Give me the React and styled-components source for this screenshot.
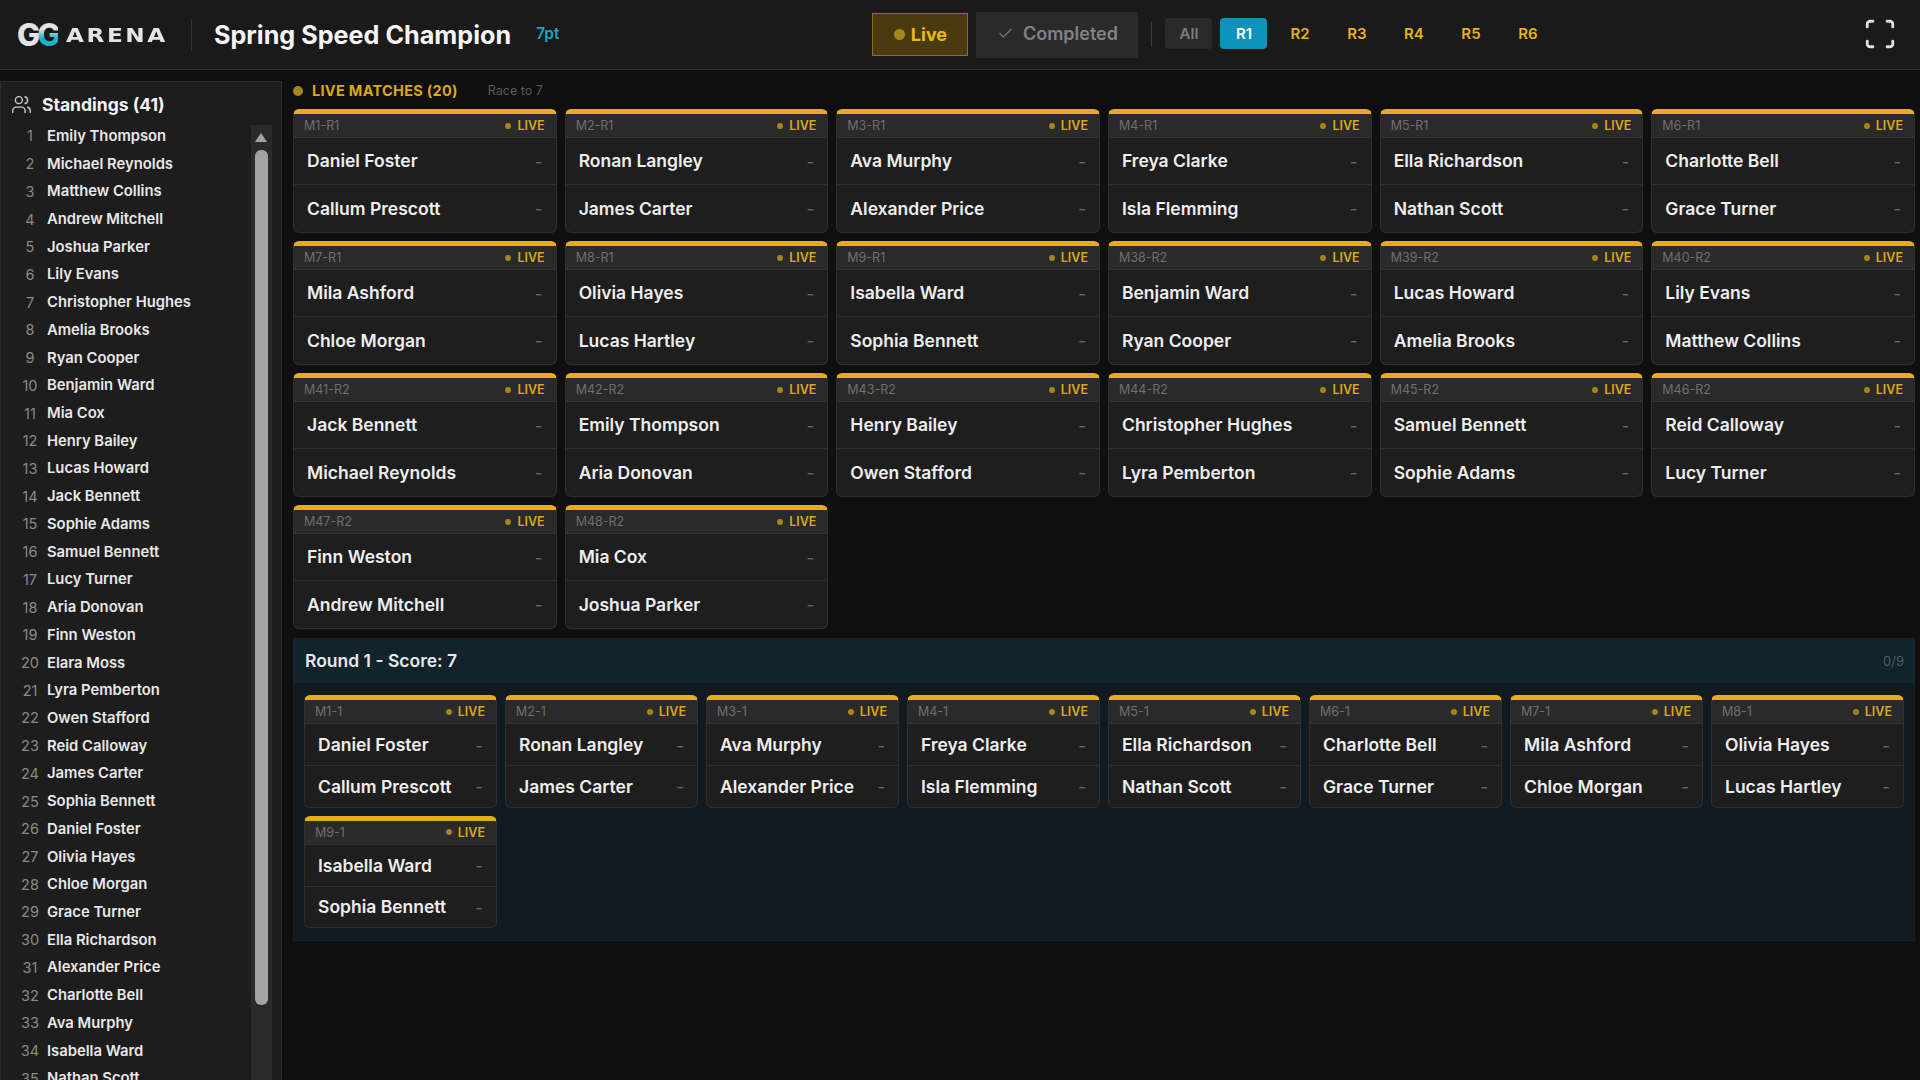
import React from "react";
import styled, { createGlobalStyle } from "styled-components";
import { Users, Check, Scan } from "lucide-react";

const GlobalStyle = createGlobalStyle`
  html, body {
    margin: 0;
    padding: 0;
    height: 100%;
    overflow: hidden;
    background: #0f0f0f;
  }
  * {
    box-sizing: border-box;
  }
  body {
    font-family: Inter, "Liberation Sans", sans-serif;
    color: #f2f2f2;
  }
`;

const standings = [
  "Emily Thompson", "Michael Reynolds", "Matthew Collins", "Andrew Mitchell", "Joshua Parker",
  "Lily Evans", "Christopher Hughes", "Amelia Brooks", "Ryan Cooper", "Benjamin Ward",
  "Mia Cox", "Henry Bailey", "Lucas Howard", "Jack Bennett", "Sophie Adams",
  "Samuel Bennett", "Lucy Turner", "Aria Donovan", "Finn Weston", "Elara Moss",
  "Lyra Pemberton", "Owen Stafford", "Reid Calloway", "James Carter", "Sophia Bennett",
  "Daniel Foster", "Olivia Hayes", "Chloe Morgan", "Grace Turner", "Ella Richardson",
  "Alexander Price", "Charlotte Bell", "Ava Murphy", "Isabella Ward", "Nathan Scott",
  "Callum Prescott", "Ronan Langley", "Freya Clarke", "Isla Flemming", "Mila Ashford", "Lucas Hartley",
];

const liveMatches = [
  ["M1-R1", "Daniel Foster", "Callum Prescott"],
  ["M2-R1", "Ronan Langley", "James Carter"],
  ["M3-R1", "Ava Murphy", "Alexander Price"],
  ["M4-R1", "Freya Clarke", "Isla Flemming"],
  ["M5-R1", "Ella Richardson", "Nathan Scott"],
  ["M6-R1", "Charlotte Bell", "Grace Turner"],
  ["M7-R1", "Mila Ashford", "Chloe Morgan"],
  ["M8-R1", "Olivia Hayes", "Lucas Hartley"],
  ["M9-R1", "Isabella Ward", "Sophia Bennett"],
  ["M38-R2", "Benjamin Ward", "Ryan Cooper"],
  ["M39-R2", "Lucas Howard", "Amelia Brooks"],
  ["M40-R2", "Lily Evans", "Matthew Collins"],
  ["M41-R2", "Jack Bennett", "Michael Reynolds"],
  ["M42-R2", "Emily Thompson", "Aria Donovan"],
  ["M43-R2", "Henry Bailey", "Owen Stafford"],
  ["M44-R2", "Christopher Hughes", "Lyra Pemberton"],
  ["M45-R2", "Samuel Bennett", "Sophie Adams"],
  ["M46-R2", "Reid Calloway", "Lucy Turner"],
  ["M47-R2", "Finn Weston", "Andrew Mitchell"],
  ["M48-R2", "Mia Cox", "Joshua Parker"],
];

const roundMatches = liveMatches.slice(0, 9).map(([id, a, b], i) => [`M${i + 1}-1`, a, b]);

const rounds = ["R1", "R2", "R3", "R4", "R5", "R6"];

const Page = styled.div`
  height: 1080px;
  overflow: hidden;
  display: flex;
  flex-direction: column;
`;

const Header = styled.header`
  height: 70px;
  flex: none;
  display: flex;
  align-items: center;
  background: #1a1a1a;
  border-bottom: 1px solid #2e2e2e;
  padding: 0 23px 0 17px;
`;

const Logo = styled.div`
  width: 150px;
  display: flex;
  align-items: center;
  white-space: nowrap;
`;

const LogoMark = styled.span`
  font-size: 31px;
  font-weight: 800;
  letter-spacing: -3px;
  line-height: 1;
  color: #e4e4e4;
`;

const LogoAccent = styled.span`
  background: linear-gradient(180deg, #e4e4e4 35%, #19b4cc 60%);
  -webkit-background-clip: text;
  background-clip: text;
  color: transparent;
`;

const LogoWord = styled.span`
  margin-left: 8px;
  font-family: "DejaVu Sans", sans-serif;
  font-size: 20px;
  font-weight: 700;
  letter-spacing: 2.2px;
  color: #e4e4e4;
  transform: scaleX(1.16);
  transform-origin: left center;
`;

const HeaderDivider = styled.div`
  width: 1px;
  height: 32px;
  background: #333;
  margin: 0 22px 0 24px;
`;

const Title = styled.h1`
  margin: 0;
  font-size: 25.2px;
  font-weight: 700;
  color: #f5f5f5;
`;

const Points = styled.span`
  margin: -3px 0 0 25px;
  font-size: 15.5px;
  font-weight: 600;
  color: #17a2c8;
`;

const StatusGroup = styled.div`
  margin-left: 313px;
  display: flex;
  align-items: center;
`;

const LiveButton = styled.button`
  height: 43px;
  width: 96px;
  display: flex;
  align-items: center;
  justify-content: center;
  gap: 6px;
  background: #4a3a10;
  border: 1px solid #8f7014;
  font: 700 18px Inter, sans-serif;
  color: #eab913;
`;

const LiveButtonDot = styled.span`
  width: 11px;
  height: 11px;
  border-radius: 50%;
  background: #a8851a;
`;

const CompletedButton = styled.button`
  height: 46px;
  width: 162px;
  margin-left: 8px;
  display: flex;
  align-items: center;
  justify-content: center;
  gap: 9px;
  padding-bottom: 4px;
  background: #2a2a2a;
  border: none;
  font: 600 18px Inter, sans-serif;
  color: #7f8389;
`;

const RoundDivider = styled.div`
  width: 1px;
  height: 25px;
  background: #3a3a3a;
  margin: 0 13px;
`;

const RoundTabs = styled.div`
  display: flex;
  align-items: center;
  gap: 10px;
  margin-top: -3px;
`;

const RoundTab = styled.button`
  height: 31px;
  width: 47px;
  margin-right: ${({ $active, $all }) => ($all ? "-2px" : $active ? "-1px" : "0")};
  border: none;
  border-radius: 4px;
  font: 600 15px Inter, sans-serif;
  background: ${({ $active, $all }) => ($active ? "#0e94bb" : $all ? "#2a2a2a" : "transparent")};
  color: ${({ $active, $all }) => ($active ? "#ffffff" : $all ? "#7c7c7c" : "#e6b417")};
`;

const FullscreenButton = styled.button`
  margin: -2px 0 0 auto;
  padding: 0;
  display: flex;
  background: none;
  border: none;
  color: #e0e0e0;
`;

const Body = styled.div`
  flex: 1;
  display: flex;
  min-height: 0;
`;

const Sidebar = styled.aside`
  position: relative;
  width: 282px;
  height: 1100px;
  flex: none;
  margin-top: 11px;
  display: flex;
  flex-direction: column;
  background: #1d1d1d;
  border: 1px solid #2c2c2c;
`;

const SidebarTitle = styled.div`
  height: 40px;
  flex: none;
  padding: 4px 0 0 10px;
  display: flex;
  align-items: center;
  gap: 10px;
  font-size: 17.5px;
  font-weight: 700;
  color: #f2f2f2;
`;

const StandingsList = styled.ol`
  margin: 0;
  padding: 0;
  list-style: none;
`;

const StandingRow = styled.li`
  height: 27.72px;
  display: flex;
  align-items: center;
`;

const StandingRank = styled.span`
  width: 24px;
  margin: 0 5px 0 17px;
  text-align: center;
  font-size: 14.5px;
  font-weight: 400;
  color: #8a8a8a;
`;

const StandingName = styled.span`
  font-size: 14.8px;
  font-weight: 600;
  color: #e8e8e8;
`;

const ScrollTrack = styled.div`
  position: absolute;
  top: 43px;
  bottom: 0;
  left: 250px;
  width: 21px;
  padding: 8px 4px 0;
  background: #2a2a2a;
`;

const ScrollArrow = styled.svg`
  display: block;
  width: 12px;
  height: 9px;
  fill: #a3a3a3;
`;

const ScrollThumb = styled.div`
  height: 855px;
  margin-top: 8px;
  border-radius: 6px;
  background: #a3a3a3;
`;

const Main = styled.main`
  flex: 1;
  min-width: 0;
  padding: 12px 5px 0 11px;
`;

const LiveLabel = styled.div`
  height: 17px;
  display: flex;
  align-items: center;
`;

const LiveLabelDot = styled.span`
  width: 10px;
  height: 10px;
  border-radius: 50%;
  background: #a8851a;
`;

const LiveLabelText = styled.span`
  margin-left: 9px;
  font-size: 14.5px;
  font-weight: 700;
  letter-spacing: 0.3px;
  color: #dca815;
`;

const RaceTo = styled.span`
  margin-left: 30px;
  font-size: 12.5px;
  color: #5a5a5a;
`;

const LiveGrid = styled.div`
  margin-top: 10px;
  display: grid;
  grid-template-columns: repeat(6, 1fr);
  gap: 8px;
`;

const Card = styled.article`
  min-width: 0;
  background: #1e1e1e;
  border: 1px solid #2f2f2f;
  border-top: 5px solid #e5ae17;
  border-radius: 6px;
  overflow: hidden;
`;

const CardHead = styled.div`
  height: 24px;
  display: flex;
  align-items: center;
  padding: 0 11px 0 10px;
  background: #2a2a2a;
  border-bottom: 1px solid #333;
`;

const CardId = styled.span`
  font-size: 12.5px;
  color: #6f6f6f;
`;

const CardDot = styled.span`
  width: 6px;
  height: 6px;
  margin-left: auto;
  border-radius: 50%;
  background: #a8851a;
`;

const CardLive = styled.span`
  margin-left: 6px;
  font-size: 12.5px;
  font-weight: 600;
  color: #dca815;
`;

const playerRowHeight = ({ $compact, $lower }) => {
  if ($compact) return $lower ? "41.5px" : "41px";
  return $lower ? "48.5px" : "45.5px";
};

const PlayerRow = styled.div`
  height: ${playerRowHeight};
  display: flex;
  align-items: center;
  justify-content: space-between;
  padding: 0 13px 0 13px;
  border-top: ${({ $lower }) => ($lower ? "1px solid #2f2f2f" : "none")};
`;

const PlayerName = styled.span`
  font-size: 17.5px;
  font-weight: 600;
  color: #eeeeee;
  white-space: nowrap;
`;

const PlayerScore = styled.span`
  padding-top: 2px;
  font-size: 17px;
  color: #666;
`;

const RoundSection = styled.section`
  margin-top: 9px;
  height: 303px;
  background: #101a20;
  border: 1px solid #12222a;
  border-top: none;
`;

const RoundHeader = styled.div`
  height: 45px;
  display: flex;
  align-items: center;
  justify-content: space-between;
  padding: 0 10px 0 11px;
  background: #12232b;
`;

const RoundTitle = styled.h2`
  margin: 0;
  font-size: 17.5px;
  font-weight: 600;
  color: #e8e8e8;
`;

const RoundProgress = styled.span`
  font-size: 13px;
  color: #4f5c62;
`;

const RoundGrid = styled.div`
  padding: 12px 10px 0;
  display: grid;
  grid-template-columns: repeat(8, 1fr);
  gap: 8px;
`;

function MatchCard({ id, a, b, compact }) {
  return (
    <Card>
      <CardHead>
        <CardId>{id}</CardId>
        <CardDot />
        <CardLive>LIVE</CardLive>
      </CardHead>
      <PlayerRow $compact={compact}>
        <PlayerName>{a}</PlayerName>
        <PlayerScore>-</PlayerScore>
      </PlayerRow>
      <PlayerRow $compact={compact} $lower>
        <PlayerName>{b}</PlayerName>
        <PlayerScore>-</PlayerScore>
      </PlayerRow>
    </Card>
  );
}

export default function App() {
  return (
    <Page>
      <GlobalStyle />
      <Header>
        <Logo>
          <LogoMark>
            G<LogoAccent>G</LogoAccent>
          </LogoMark>
          <LogoWord>ARENA</LogoWord>
        </Logo>
        <HeaderDivider />
        <Title>Spring Speed Champion</Title>
        <Points>7pt</Points>
        <StatusGroup>
          <LiveButton>
            <LiveButtonDot />
            Live
          </LiveButton>
          <CompletedButton>
            <Check size={17} color="#6f7276" strokeWidth={1.8} />
            Completed
          </CompletedButton>
        </StatusGroup>
        <RoundDivider />
        <RoundTabs>
          <RoundTab $all>All</RoundTab>
          {rounds.map((r) => (
            <RoundTab key={r} $active={r === "R1"}>
              {r}
            </RoundTab>
          ))}
        </RoundTabs>
        <FullscreenButton>
          <Scan size={34} strokeWidth={2} />
        </FullscreenButton>
      </Header>
      <Body>
        <Sidebar>
          <SidebarTitle>
            <Users size={21} color="#c9c9c9" strokeWidth={1.6} />
            Standings (41)
          </SidebarTitle>
          <StandingsList>
            {standings.map((name, i) => (
              <StandingRow key={name}>
                <StandingRank>{i + 1}</StandingRank>
                <StandingName>{name}</StandingName>
              </StandingRow>
            ))}
          </StandingsList>
          <ScrollTrack>
            <ScrollArrow viewBox="0 0 12 9">
              <polygon points="0,9 12,9 6,0" />
            </ScrollArrow>
            <ScrollThumb />
          </ScrollTrack>
        </Sidebar>
        <Main>
          <LiveLabel>
            <LiveLabelDot />
            <LiveLabelText>LIVE MATCHES (20)</LiveLabelText>
            <RaceTo>Race to 7</RaceTo>
          </LiveLabel>
          <LiveGrid>
            {liveMatches.map(([id, a, b]) => (
              <MatchCard key={id} id={id} a={a} b={b} />
            ))}
          </LiveGrid>
          <RoundSection>
            <RoundHeader>
              <RoundTitle>Round 1 - Score: 7</RoundTitle>
              <RoundProgress>0/9</RoundProgress>
            </RoundHeader>
            <RoundGrid>
              {roundMatches.map(([id, a, b]) => (
                <MatchCard key={id} id={id} a={a} b={b} compact />
              ))}
            </RoundGrid>
          </RoundSection>
        </Main>
      </Body>
    </Page>
  );
}
